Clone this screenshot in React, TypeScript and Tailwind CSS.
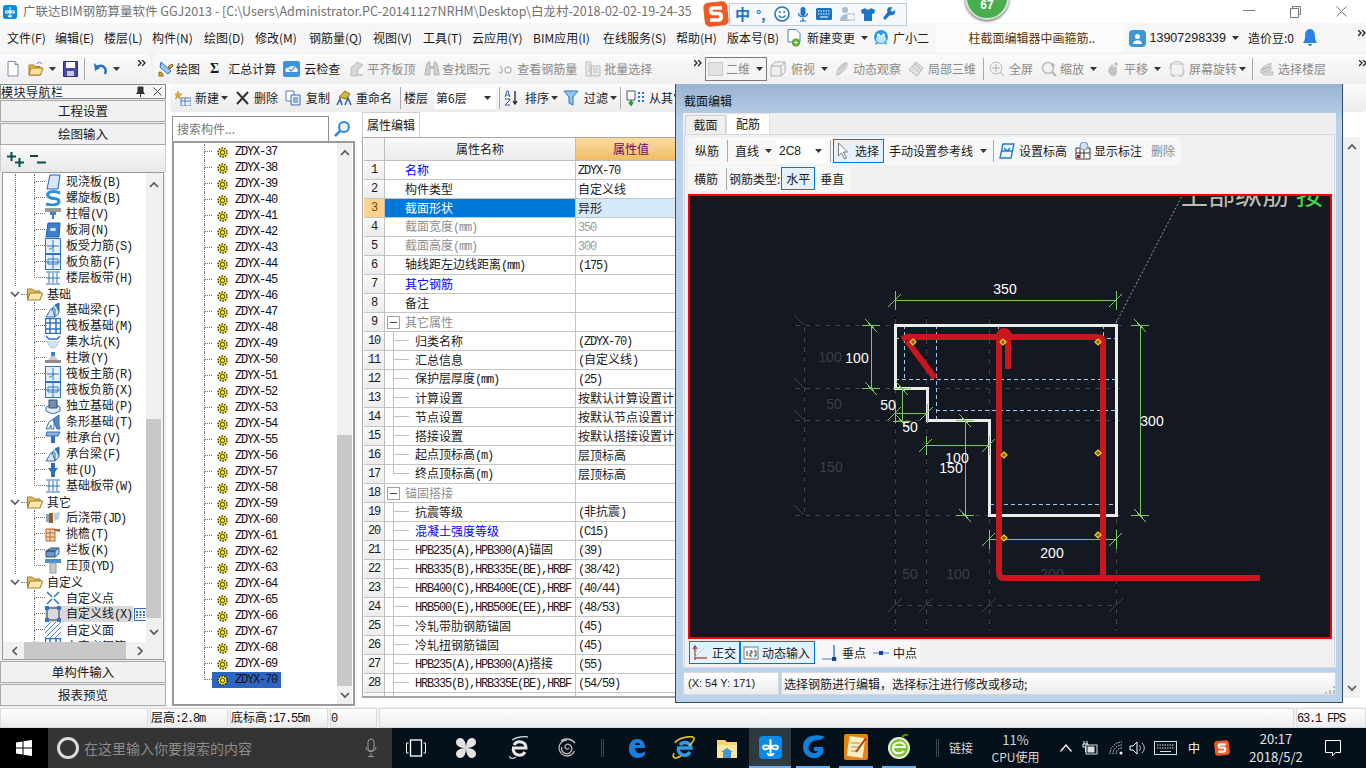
import type { ReactNode } from 'react';

const mono = "font-['Liberation_Mono',monospace] text-[12px] tracking-[-1.2px]";

function I({ children, w = 16, h = 16, className = '' }: { children: ReactNode; w?: number; h?: number; className?: string }) {
  return (
    <svg width={w} height={h} viewBox={`0 0 ${w} ${h}`} className={`shrink-0 ${className}`}>
      {children}
    </svg>
  );
}

function Caret({ className = '' }: { className?: string }) {
  return (
    <svg width="7" height="4" viewBox="0 0 7 4" className={`shrink-0 ${className}`}>
      <path d="M0 0h7L3.5 4z" fill="#333" />
    </svg>
  );
}

function More({ className = '' }: { className?: string }) {
  return (
    <svg width="8" height="7" viewBox="0 0 8 7" className={`shrink-0 ${className}`}>
      <path d="M0 0l3 3-3 3M4 0l3 3-3 3" fill="none" stroke="#222" strokeWidth="1.3" />
    </svg>
  );
}

function Sep({ className = '' }: { className?: string }) {
  return <div className={`w-px h-[22px] bg-[#a8a8a8] shrink-0 ${className}`} />;
}

// SimSun style text: ascii in a narrow mono, the rest in 12px
function Sim({ text }: { text: string }) {
  const parts = text.split(/([\x00-\x7f]+)/).filter(Boolean);
  return (
    <span className="whitespace-nowrap">
      {parts.map((p, i) =>
        /^[\x00-\x7f]+$/.test(p) ? (
          <span key={i} className={mono}>{p}</span>
        ) : (
          <span key={i}>{p}</span>
        ),
      )}
    </span>
  );
}

function AppLogo({ size = 14 }: { size?: number }) {
  return (
    <svg width={size} height={size} viewBox="0 0 14 14" className="shrink-0">
      <rect width="14" height="14" rx="2.500" fill="#0a8be8" />
      <path
        d="M7 2.500V11M7 6.800C5 5.300 2.500 5.500 2.500 7S5 8.300 7 6.800C9 5.300 11.500 5.500 11.500 7S9 8.300 7 6.800M5.300 10.800c.5 1.300 3 1.300 3.400 0"
        fill="none"
        stroke="#fff"
        strokeWidth="1.200"
        strokeLinecap="round"
      />
    </svg>
  );
}

function SLogo({ size = 26 }: { size?: number }) {
  return (
    <svg width={size} height={size} viewBox="0 0 26 26" className="shrink-0">
      <rect x="1" y="1" width="24" height="24" rx="5" fill="#ee5a24" transform="rotate(-6 13 13)" />
      <path d="M19 7H10c-3 0-3 5 0 5.500h6c3 0 3 6 0 6.500H7" fill="none" stroke="#fff" strokeWidth="3.600" />
    </svg>
  );
}

function SogouBar() {
  return (
    <div className="absolute left-[703px] top-0 flex items-center h-[28px]">
      <SLogo />
      <div className="h-[23px] w-[178px] border border-[#b8cbe2] bg-[#f6f8fb] flex items-center">
        <span className="ml-[5px] text-[15px] font-bold text-[#1b74c5]">中</span>
        <span className="ml-[6px] text-[13px] font-bold text-[#1b74c5] leading-none">°,</span>
        <I className="ml-[8px]">
          <circle cx="8" cy="8" r="7" fill="#fff" stroke="#1b74c5" strokeWidth="1.600" />
          <path d="M4.500 9.500c2 2.500 5 2.500 7 0" fill="none" stroke="#1b74c5" strokeWidth="1.300" />
          <circle cx="5.800" cy="6" r="1" fill="#1b74c5" />
          <circle cx="10.200" cy="6" r="1" fill="#1b74c5" />
        </I>
        <I className="ml-[7px]" w={12}>
          <rect x="3.500" y="1" width="5" height="9" rx="2.500" fill="#1b74c5" />
          <path d="M1.500 7c0 5 9 5 9 0M6 12v3M3 15h6" fill="none" stroke="#1b74c5" strokeWidth="1.200" />
        </I>
        <I className="ml-[7px]">
          <rect y="2" width="16" height="12" rx="1.500" fill="#1b74c5" />
          <path d="M2 5h12M2 8h12" stroke="#fff" strokeDasharray="1.500 1" />
          <path d="M4 11h8" stroke="#fff" />
        </I>
        <I className="ml-[7px]">
          <circle cx="6" cy="4" r="3" fill="#a9bcd0" />
          <path d="M1 15c0-8 9-8 10-3v3z" fill="#a9bcd0" />
          <rect x="8" y="8" width="8" height="6" fill="#f6f8fb" stroke="#a9bcd0" />
        </I>
        <I className="ml-[5px]">
          <path d="M5 2L1 4l1 4 2-.5V15h8V7.500l2 .5 1-4-4-2c-1 2-5 2-6 0z" fill="#1b74c5" />
        </I>
        <I className="ml-[6px]" w={14}>
          <path d="M13 4l-2.500 2-2-2L10.500 1.500C7-.5 4 3 5.500 6L1 12l2 2 5-5c4 1 6-2 5-5z" fill="#1b74c5" />
        </I>
      </div>
    </div>
  );
}

function TitleBar() {
  return (
    <div className="h-[23px] bg-white flex items-center relative">
      <div className="ml-[3px]"><AppLogo /></div>
      <span className="ml-[6px] text-[12.5px] text-[#707070] whitespace-nowrap">
        广联达BIM钢筋算量软件 GGJ2013 - [C:\Users\Administrator.PC-20141127NRHM\Desktop\白龙村-2018-02-02-19-24-35
      </span>
      <div className="absolute left-[965px] top-[-24px] w-[44px] h-[44px] rounded-full bg-[#47ad4f] border-[2px] border-[#d7e6d8] shadow-[0_1px_3px_#555] flex items-end justify-center pb-[7px]">
        <span className="text-[12px] font-bold text-white leading-none font-['Liberation_Sans',sans-serif]">67</span>
      </div>
      <div className="absolute left-[1243px] top-[10px] w-[12px] h-px bg-[#777]" />
      <div className="absolute left-[1290px] top-[6px]">
        <I w={11} h={12}>
          <path d="M2.500 2.500V.5h8v8H8.500M.5 2.500h8v9h-8z" fill="none" stroke="#777" />
        </I>
      </div>
      <div className="absolute left-[1336px] top-[6px]">
        <I w={11} h={11}>
          <path d="M.5.5l10 10M10.500.5l-10 10" stroke="#777" />
        </I>
      </div>
    </div>
  );
}

function MenuBar() {
  const items: [string, string][] = [
    ['文件(F)', 'w-[48px]'],
    ['编辑(E)', 'w-[49px]'],
    ['楼层(L)', 'w-[48px]'],
    ['构件(N)', 'w-[52px]'],
    ['绘图(D)', 'w-[51px]'],
    ['修改(M)', 'w-[54px]'],
    ['钢筋量(Q)', 'w-[64px]'],
    ['视图(V)', 'w-[50px]'],
    ['工具(T)', 'w-[49px]'],
    ['云应用(Y)', 'w-[61px]'],
    ['BIM应用(I)', 'w-[70px]'],
    ['在线服务(S)', 'w-[73px]'],
    ['帮助(H)', 'w-[51px]'],
    ['版本号(B)', 'w-[60px]'],
  ];
  return (
    <div className="h-[30px] bg-[#f6f6f6] flex items-center text-[12px] text-[#1a1a1a] whitespace-nowrap">
      <div className="flex items-center pl-[7px]">
        {items.map(([t, c]) => (
          <span key={t} className={`${c} shrink-0`}>{t}</span>
        ))}
      </div>
      <I w={14} h={18}>
        <path d="M1 .5h8l4 4V13H1z" fill="#fff" stroke="#3a7fc5" />
        <circle cx="9" cy="13.500" r="4" fill="#5aa82c" />
        <path d="M7 13.500h4M9 11.500v4" stroke="#fff" />
      </I>
      <span className="ml-[6px]">新建变更</span>
      <Caret className="ml-[6px]" />
      <I className="ml-[5px]">
        <circle cx="8" cy="7" r="7" fill="#2b9be8" />
        <ellipse cx="8" cy="9" rx="5" ry="4" fill="#bfe4fb" />
        <circle cx="5.500" cy="5" r="1.500" fill="#fff" />
        <circle cx="10.500" cy="5" r="1.500" fill="#fff" />
        <path d="M3 12l-1 3 3-1.500M13 12l1 3-3-1.500" fill="#2b9be8" />
      </I>
      <span className="ml-[4px]">广小二</span>
      <div className="ml-[7px] w-[188px] h-[29px] bg-[#fbfbfb] rounded-sm flex items-center justify-center text-[#5c3400] pl-[4px]">
        柱截面编辑器中画箍筋..
      </div>
      <div className="ml-[5px] h-[17px] w-[17px] rounded-sm bg-[#3f96d6] flex items-center justify-center">
        <I w={11} h={11}>
          <circle cx="5.500" cy="3.500" r="2.500" fill="#fff" />
          <path d="M1 11c0-5 9-5 9 0z" fill="#fff" />
        </I>
      </div>
      <span className="ml-[4px] font-['Liberation_Sans',sans-serif] text-[12.5px]">13907298339</span>
      <Caret className="ml-[6px]" />
      <span className="ml-[9px]">造价豆:0</span>
      <I className="ml-[8px]" h={20}>
        <path d="M8 1c-4 0-5 4-5 8 0 3-1 4-2 6h14c-1-2-2-3-2-6 0-4-1-8-5-8zM6 16a2 2 0 004 0z" fill="#2a82e4" />
      </I>
      <More className="ml-[40px] -mt-[10px]" />
    </div>
  );
}

function GrayT({ children, className = '' }: { children: ReactNode; className?: string }) {
  return <span className={`text-[#8a8a8a] ${className}`}>{children}</span>;
}

function MainToolbar() {
  return (
    <div className="h-[31px] bg-[#f2f2f2] flex items-center gap-[4px] text-[12px] text-[#1a1a1a] whitespace-nowrap">
      <div className="w-[150px] h-[29px] shrink-0 bg-gradient-to-b from-[#fbfbfb] to-[#efefef] rounded-sm flex items-center">
        <I w={12} className="ml-[7px]">
          <path d="M1 .5h7l3 3V15H1z" fill="#fff" stroke="#7f8ea3" />
          <path d="M8 .5v3h3" fill="#dde" stroke="#7f8ea3" />
        </I>
        <I className="ml-[9px]">
          <path d="M1 14V4h5l1 1.500h5V14z" fill="#e8b94a" stroke="#a87a1c" />
          <path d="M3 7h12l-2.500 7H1z" fill="#fbe29b" stroke="#a87a1c" />
          <path d="M9 3c1-2 4-2 5 0" fill="none" stroke="#3a7fc5" />
        </I>
        <Caret className="ml-[5px]" />
        <I w={15} className="ml-[7px]">
          <path d="M.5.5h14v15H.5z" fill="#474aa8" stroke="#2c2e78" />
          <rect x="3" y="1" width="9" height="6" fill="#fff" />
          <rect x="4" y="10" width="7" height="5" fill="#c9c9d8" />
        </I>
        <Sep className="ml-[6px]" />
        <I w={14} className="ml-[8px]">
          <path d="M12 13c2-5-1-9-6-8L3 6.500" fill="none" stroke="#2b6fc0" strokeWidth="2.500" />
          <path d="M1 2l1 8 5-3z" fill="#2b6fc0" />
        </I>
        <Caret className="ml-[6px]" />
        <More className="ml-[18px] -mt-[10px]" />
      </div>
      <div className="w-[546px] h-[29px] shrink-0 bg-gradient-to-b from-[#fbfbfb] to-[#efefef] rounded-sm flex items-center">
        <I className="ml-[4px]">
          <path d="M3 1l10 9-3 3-8-7z" fill="#9cc6ea" stroke="#2b6fc0" />
          <path d="M1 11c3 0 4 2 4 4H1zM10 6l4-3 1 2-3 3z" fill="#e0a22a" stroke="#8a5f10" />
        </I>
        <span className="ml-[2px]">绘图</span>
        <span className="ml-[10px] font-bold text-[14px] font-['Liberation_Serif',serif]">Σ</span>
        <span className="ml-[9px]">汇总计算</span>
        <I w={17} className="ml-[7px]">
          <rect width="17" height="16" rx="2" fill="#3a93dc" />
          <path d="M3 11c-2-3 1-5 3-4 1-3 6-3 7 0 2 0 3 3 1 4z" fill="#fff" />
          <path d="M6 8l2 2 4-4" fill="none" stroke="#3a93dc" strokeWidth="1.300" />
        </I>
        <span className="ml-[4px]">云检查</span>
        <I className="ml-[9px]">
          <path d="M8 1l6 3-5 4-1 7H2V7z" fill="#d8d8d8" stroke="#bdbdbd" />
          <path d="M5 13h9v2H5z" fill="#c8c8c8" />
        </I>
        <GrayT className="ml-[2px]">平齐板顶</GrayT>
        <I className="ml-[9px]">
          <path d="M2 6l2-5h2v13H1zM14 6l-2-5h-2v13h5z" fill="#cfcfcf" stroke="#b5b5b5" />
          <rect x="6" y="5" width="4" height="3" fill="#bbb" />
        </I>
        <GrayT className="ml-[2px]">查找图元</GrayT>
        <I className="ml-[7px]">
          <circle cx="11" cy="9" r="3" fill="none" stroke="#bdbdbd" strokeWidth="1.500" />
          <path d="M2 11c2 2 4 0 3-3L3 5" fill="none" stroke="#bdbdbd" strokeWidth="1.500" />
        </I>
        <GrayT className="ml-[4px]">查看钢筋量</GrayT>
        <I className="ml-[8px]">
          <path d="M1 1h5v14H1zM6 5h9v10H6z" fill="#e8e8e8" stroke="#bdbdbd" />
          <path d="M3 4h2M3 7h2M3 10h2M8 8h5M8 11h5" stroke="#bdbdbd" />
        </I>
        <GrayT className="ml-[3px]">批量选择</GrayT>
        <More className="ml-[42px] -mt-[10px]" />
      </div>
      <div className="flex-1 h-[29px] bg-gradient-to-b from-[#fbfbfb] to-[#efefef] rounded-sm flex items-center">
        <div className="ml-[1px] w-[62px] h-[24px] border border-[#7a7a7a] flex items-center bg-[#f4f4f4]">
          <I w={15} h={14} className="ml-[2px]">
            <rect x=".5" y=".5" width="14" height="13" fill="#e3e3e3" stroke="#c9c9c9" />
          </I>
          <GrayT className="ml-[3px]">二维</GrayT>
          <Caret className="ml-[6px]" />
        </div>
        <I className="ml-[3px]">
          <path d="M1 5l4-4h10v10l-4 4H1zM1 5h10v10M11 5l4-4" fill="#f0f0f0" stroke="#b0b0b0" />
        </I>
        <GrayT className="ml-[5px]">俯视</GrayT>
        <Caret className="ml-[6px]" />
        <I className="ml-[6px]">
          <path d="M13 1C7 2 3 7 2 13c-1 3 4 1 6-1s7-7 6-10z" fill="#c9c9c9" />
          <path d="M1 11c4 1 9-3 13-9" fill="none" stroke="#e6e6e6" />
        </I>
        <GrayT className="ml-[3px]">动态观察</GrayT>
        <I className="ml-[7px]">
          <path d="M8 1l7 6-6 8-8-6z" fill="#e3e3e3" stroke="#b5b5b5" />
          <path d="M4 5l7 6M7 3l6 6" stroke="#b5b5b5" />
        </I>
        <GrayT className="ml-[4px]">局部三维</GrayT>
        <Sep className="ml-[7px]" />
        <I className="ml-[5px]">
          <circle cx="7" cy="7" r="6" fill="#f3f3f3" stroke="#b8b8b8" />
          <path d="M7 3v8M3 7h8M11 11l4 4" stroke="#b0b0b0" />
        </I>
        <GrayT className="ml-[4px]">全屏</GrayT>
        <I className="ml-[8px]">
          <circle cx="7" cy="7" r="5.500" fill="#f3f3f3" stroke="#bcbcbc" strokeWidth="1.500" />
          <path d="M11 11l4 4" stroke="#b0b0b0" strokeWidth="2" />
          <path d="M12 2v4M10 4h4" stroke="#b0b0b0" />
        </I>
        <GrayT className="ml-[3px]">缩放</GrayT>
        <Caret className="ml-[6px]" />
        <I className="ml-[8px]">
          <path d="M4 7c0-2 2-2 2-1V4c0-1 2-1 2 0v2c1-1 2-1 2 0 1-1 2 0 2 1v4c0 3-2 4-4 4s-4-2-5-5z" fill="#c4c4c4" />
          <path d="M11 1v4M9 3h4" stroke="#b0b0b0" />
        </I>
        <GrayT className="ml-[3px]">平移</GrayT>
        <Caret className="ml-[6px]" />
        <I w={18} className="ml-[7px]">
          <rect x="3" y="3" width="12" height="11" fill="#f3f3f3" stroke="#c4c4c4" />
          <path d="M2 8a7 7 0 0113-4M16 9a7 7 0 01-13 4" fill="none" stroke="#b5b5b5" />
        </I>
        <GrayT className="ml-[3px]">屏幕旋转</GrayT>
        <Caret className="ml-[2px]" />
        <Sep className="ml-[6px]" />
        <I w={15} className="ml-[7px]">
          <path d="M3 6l8-4v3L3 9zM1 8l10-2v3L1 12zM3 11h10v3H3z" fill="#d9d9d9" stroke="#bdbdbd" />
        </I>
        <GrayT className="ml-[3px]">选择楼层</GrayT>
        <More className="ml-[33px] -mt-[10px]" />
      </div>
    </div>
  );
}

const treeIcons: Record<string, ReactNode> = {
  slab: <path d="M5 1h10l-2 14H2z" fill="#d8e6f7" stroke="#1f5fb5" />,
  spiral: <path d="M15 3C8 0 1 2 3 6s11 1 11 5-7 5-13 3" fill="none" stroke="#2a90e2" strokeWidth="3" />,
  cap: (
    <>
      <rect y="2" width="16" height="4" fill="#9a9a9a" />
      <path d="M5 6h6v3H9v4H7V9H5z" fill="#3f7fc9" />
    </>
  ),
  hole: (
    <>
      <path d="M3 1h12l-1 14H1z" fill="#3f7fd0" stroke="#1f5fb5" />
      <rect x="5" y="6" width="6" height="3" rx="1.500" fill="#d8e6f7" />
    </>
  ),
  rebar: (
    <>
      <rect x=".5" y=".5" width="15" height="15" fill="#e6f0fb" stroke="#2f74c4" />
      <path d="M8 2v12M2 8h12M4 11c2 0 4-1 4-3" fill="none" stroke="#2f74c4" />
    </>
  ),
  neg: (
    <>
      <rect x=".5" y=".5" width="15" height="15" fill="#e6f0fb" stroke="#2f74c4" />
      <path d="M8 1v14M3 5h10v5H3zM1 8h14" fill="none" stroke="#2f74c4" />
    </>
  ),
  band: <path d="M1 2h14M1 14h14M4 3v10M8 3v10M12 3v10M1 8h14" fill="none" stroke="#2f74c4" />,
  beam: (
    <>
      <path d="M1 15l5-8h4v8zM7 6l7-5v10l-4 4z" fill="#d5e5f7" stroke="#2f6fb5" />
      <path d="M10 2l4-1v10z" fill="#2f6fb5" />
    </>
  ),
  raft: (
    <>
      <rect x=".5" y=".5" width="15" height="15" fill="#fff" stroke="#2f74c4" strokeWidth="1.500" />
      <path d="M5 1v14M11 1v14M1 5h14M1 11h14" stroke="#2f74c4" strokeWidth="1.500" />
    </>
  ),
  pit: (
    <>
      <path d="M1 2l3 3h8l3-3" fill="none" stroke="#2f74c4" strokeWidth="1.500" />
      <path d="M1 7c2 0 2 7 7 7s5-7 7-7" fill="#cfe3f6" stroke="#7fa9d8" strokeDasharray="1 1" />
    </>
  ),
  pier: (
    <>
      <path d="M6 2h4v4H6z" fill="#3f7fc9" />
      <path d="M3 10l3-4h4l3 4z" fill="#c9c9c9" />
      <rect y="10" width="16" height="3" fill="#8c8c8c" />
    </>
  ),
  iso: (
    <>
      <path d="M1 9l7-3 7 3v4l-7 3-7-3z" fill="#e8f0fa" stroke="#2f6fb5" />
      <path d="M4 2h8v8H4z" fill="#6f8fb5" stroke="#2f4f7f" />
    </>
  ),
  strip: (
    <>
      <path d="M1 15l3-7 3-2h2v9h-3v-4l-2 4z" fill="#fff" stroke="#2f6fb5" />
      <path d="M8 5l6-4v10l1 4h-3z" fill="#5f88bd" stroke="#2f6fb5" />
    </>
  ),
  piletop: (
    <>
      <path d="M2 2h13l-2 4H1z" fill="#8fb2d9" stroke="#2f6fb5" />
      <path d="M6 6h4v7H6z" fill="#2f6fb5" />
    </>
  ),
  pile: <path d="M6 1h4v5h3l-3 4v5H6v-5L3 6h3z" fill="#2f6fb5" />,
  post: (
    <>
      <path d="M1 4h6l1 8H1z" fill="#87a4c4" />
      <path d="M4 3h4v10H4z" fill="#a1561d" />
      <path d="M9 3l6-1-1 7-5 2z" fill="#b8cfe8" />
    </>
  ),
  eave: (
    <>
      <path d="M1 3h9v12H1z" fill="#f3d6b5" stroke="#c0622a" />
      <path d="M1 7h9M1 11h9M5 3v12" stroke="#c0622a" />
      <path d="M7 3h8v3l-4-1z" fill="#8f6b4a" />
    </>
  ),
  rail: (
    <>
      <path d="M1 9l5-3h8l-4 3zM1 9h9v6H1z" fill="#6b97c9" stroke="#2f4f7f" />
      <path d="M10 9l4-3v6l-4 3z" fill="#b8d0ea" stroke="#2f6fb5" />
    </>
  ),
  coping: (
    <>
      <rect y="1" width="16" height="4" fill="#4f8fd0" />
      <rect x="5" y="5" width="6" height="10" fill="#c8c8c8" stroke="#999" />
    </>
  ),
  point: <path d="M2 2l5 5M14 2L9 7M2 14l5-5M14 14L9 9" stroke="#2f74c4" strokeWidth="1.500" />,
  line: (
    <>
      <rect x="2" y="2" width="12" height="12" fill="none" stroke="#23374f" />
      <path d="M0 0h4v4H0zM12 0h4v4h-4zM0 12h4v4H0zM12 12h4v4h-4z" fill="#2f74c4" />
    </>
  ),
  area: <path d="M0 6L6 0M0 11L11 0M0 16L16 0M5 16L16 5M10 16l6-6" stroke="#3f87d6" />,
};

type TreeRow = { t: string; i?: string; last?: boolean; outer?: boolean; sel?: boolean; folder?: boolean };

const treeRows: TreeRow[] = [
  { t: '现浇板(B)', i: 'slab', outer: true },
  { t: '螺旋板(B)', i: 'spiral', outer: true },
  { t: '柱帽(V)', i: 'cap', outer: true },
  { t: '板洞(N)', i: 'hole', outer: true },
  { t: '板受力筋(S)', i: 'rebar', outer: true },
  { t: '板负筋(F)', i: 'neg', outer: true },
  { t: '楼层板带(H)', i: 'band', outer: true, last: true },
  { t: '基础', folder: true },
  { t: '基础梁(F)', i: 'beam', outer: true },
  { t: '筏板基础(M)', i: 'raft', outer: true },
  { t: '集水坑(K)', i: 'pit', outer: true },
  { t: '柱墩(Y)', i: 'pier', outer: true },
  { t: '筏板主筋(R)', i: 'rebar', outer: true },
  { t: '筏板负筋(X)', i: 'neg', outer: true },
  { t: '独立基础(P)', i: 'iso', outer: true },
  { t: '条形基础(T)', i: 'strip', outer: true },
  { t: '桩承台(V)', i: 'piletop', outer: true },
  { t: '承台梁(F)', i: 'beam', outer: true },
  { t: '桩(U)', i: 'pile', outer: true },
  { t: '基础板带(W)', i: 'band', outer: true, last: true },
  { t: '其它', folder: true },
  { t: '后浇带(JD)', i: 'post', outer: true },
  { t: '挑檐(T)', i: 'eave', outer: true },
  { t: '栏板(K)', i: 'rail', outer: true },
  { t: '压顶(YD)', i: 'coping', outer: true, last: true },
  { t: '自定义', folder: true },
  { t: '自定义点', i: 'point' },
  { t: '自定义线(X)', i: 'line', sel: true },
  { t: '自定义面', i: 'area' },
  { t: '自定义钢筋', i: 'raft' },
];

function Connector({ last }: { last?: boolean }) {
  return (
    <div className="w-[11px] h-full shrink-0 flex flex-col">
      <div className="h-2 border-l border-b border-dotted border-[#777]" />
      <div className={last ? 'h-2' : 'h-2 border-l border-dotted border-[#777]'} />
    </div>
  );
}

function FolderIcon() {
  return (
    <I w={16} h={14}>
      <path d="M.5 12V2h5l1.500 2h6v8z" fill="#e8c05a" stroke="#9a7a2a" />
      <path d="M3 6h12.500l-2.500 7H.5z" fill="#fde9ad" stroke="#9a7a2a" />
    </I>
  );
}

function Chevron({ dir, className = '' }: { dir: 'up' | 'down' | 'left' | 'right'; className?: string }) {
  const d = { up: 'M1 6l4-4 4 4', down: 'M1 2l4 4 4-4', left: 'M6 1L2 5l4 4', right: 'M2 1l4 4-4 4' }[dir];
  const sz = dir === 'up' || dir === 'down' ? { w: 10, h: 8 } : { w: 8, h: 10 };
  return (
    <svg width={sz.w} height={sz.h} viewBox={`0 0 ${sz.w} ${sz.h}`} className={`shrink-0 ${className}`}>
      <path d={d} fill="none" stroke="#555" strokeWidth="1.700" />
    </svg>
  );
}

function NavButton({ label, className = '' }: { label: string; className?: string }) {
  return (
    <div className={`h-[22px] border border-[#a8a8a8] bg-[#f1f1f1] flex items-center justify-center text-[12.5px] text-[#1a1a1a] ${className}`}>
      {label}
    </div>
  );
}

function LeftPanel() {
  return (
    <div className="w-[166px] shrink-0 flex flex-col text-[12px] text-[#1a1a1a] bg-[#f0f0f0]">
      <div className="h-[15px] border border-[#8a8a8a] bg-[#f6f6f6] flex items-center leading-none">
        <span className="tracking-[0.5px]">模块导航栏</span>
        <I w={9} h={11} className="ml-[72px]">
          <path d="M2 1h5v5l1.500 1.500h-8L2 6zM4.500 7.500V11" fill="#333" stroke="#333" />
        </I>
        <I w={9} h={9} className="ml-[8px]">
          <path d="M.5.5l8 8M8.500.5l-8 8" stroke="#444" />
        </I>
      </div>
      <NavButton label="工程设置" className="mt-[1px] mx-0" />
      <NavButton label="绘图输入" className="mt-[1px]" />
      <div className="h-[27px] bg-gradient-to-b from-[#fafafa] to-[#e8e8e8] border-x border-[#cfcfcf] flex items-center pl-[6px] gap-[5px]">
        <I w={18} h={16}>
          <path d="M4.500 1v9M0 5.500h9M12.500 7v9M8 11.500h9" stroke="#0a4f4a" strokeWidth="2" />
        </I>
        <I w={17} h={16}>
          <path d="M0 5h8M7 11.500h9" stroke="#0a4f4a" strokeWidth="2" />
        </I>
      </div>
      <div className="h-[488px] mx-[2px] border border-[#9a9a9a] flex flex-col bg-white">
        <div className="h-[469px] flex overflow-hidden">
          <div className="w-[143px] pt-px overflow-hidden">
            {treeRows.map((r) =>
              r.folder ? (
                <div key={r.t} className="h-4 flex items-center">
                  <Chevron dir="down" className="ml-[7px]" />
                  <div className="w-[6px] ml-[1px] border-b border-dotted border-[#777]" />
                  <FolderIcon />
                  <span className="ml-[4px] whitespace-nowrap">{r.t}</span>
                </div>
              ) : (
                <div key={r.t} className="h-4 flex items-center">
                  <div className="w-[12px] h-full shrink-0" />
                  <div className={r.outer ? 'w-[19px] h-full shrink-0 border-l border-dotted border-[#777]' : 'w-[19px] h-full shrink-0'} />
                  <Connector last={r.last} />
                  <div className={r.sel ? 'flex items-center h-full bg-[#d9d9d9] pr-[1px] shrink-0' : 'flex items-center h-full shrink-0'}>
                    <I>{treeIcons[r.i!]}</I>
                    <span className="ml-[5px]"><Sim text={r.t} /></span>
                  </div>
                  {r.sel && (
                    <I w={13} h={13} className="ml-[1px]">
                      <rect x=".5" y=".5" width="12" height="12" fill="#fff" stroke="#2f74c4" />
                      <path d="M3 3v7M6.500 3v7M10 3v7" stroke="#2f74c4" strokeWidth="2" strokeDasharray="2 1" />
                    </I>
                  )}
                </div>
              ),
            )}
          </div>
          <div className="w-[15px] bg-[#f0f0f0] flex flex-col items-center shrink-0">
            <div className="h-[16px] flex items-center pt-[8px]"><Chevron dir="up" /></div>
            <div className="flex-1 w-full flex flex-col justify-end">
              <div className="h-[199px] bg-[#c8c8c8]" />
            </div>
            <div className="h-[24px] pt-[10px]"><Chevron dir="down" /></div>
          </div>
          <div className="flex-1 bg-[#f0f0f0]" />
        </div>
        <div className="flex-1 bg-[#f0f0f0] flex items-center">
          <Chevron dir="left" className="ml-[8px]" />
          <div className="ml-[5px] w-[102px] h-full bg-[#c8c8c8]" />
          <Chevron dir="right" className="ml-[10px]" />
        </div>
      </div>
      <NavButton label="单构件输入" className="mt-[1px]" />
      <NavButton label="报表预览" className="mt-[1px]" />
    </div>
  );
}

function SecondToolbar() {
  return (
    <div className="h-[28px] ml-[4px] bg-gradient-to-b from-[#fbfbfb] to-[#ececec] rounded-sm flex items-center text-[12px] text-[#1a1a1a] whitespace-nowrap">
      <I className="ml-[5px]">
        <path d="M3 1l1 3h3l-2.500 2L5 9 3 7 .5 9l1-3L0 4h2z" fill="#e3b21a" stroke="#a0780a" strokeWidth=".5" />
        <rect x="6" y="8" width="10" height="8" fill="#e8f0fa" stroke="#5d7ea5" />
        <path d="M6 11h10M10 8v8" stroke="#5d7ea5" />
      </I>
      <span className="ml-[4px]">新建</span>
      <Caret className="ml-[2px]" />
      <I w={13} h={14} className="ml-[8px]">
        <path d="M1 1l11 12M12 1L1 13" stroke="#333" strokeWidth="2" />
      </I>
      <span className="ml-[5px]">删除</span>
      <I className="ml-[7px]">
        <path d="M1 1h8v10H1z" fill="#fff" stroke="#5d7ea5" />
        <path d="M6 5h9v10H6z" fill="#e8f0fa" stroke="#3a6da8" />
        <path d="M8 8h5M8 10h5M8 12h5" stroke="#3a6da8" />
      </I>
      <span className="ml-[5px]">复制</span>
      <I className="ml-[6px]">
        <path d="M3 7l6-6 5 3-4 5z" fill="#d8b43a" stroke="#8f7215" />
        <path d="M1 15l3-6 2 6M9 15l3-7 3 7" fill="none" stroke="#2f5fa5" strokeWidth="1.500" />
      </I>
      <span className="ml-[4px]">重命名</span>
      <Sep className="ml-[8px]" />
      <span className="ml-[3px]">楼层</span>
      <div className="ml-[6px] w-[62px] h-[21px] bg-white flex items-center justify-between px-[2px]">
        <span>第6层</span>
        <Caret className="mr-[3px]" />
      </div>
      <Sep className="ml-[3px]" />
      <I className="ml-[4px]">
        <path d="M1 7l2-6h1l2 6M2 5h3M1 9h5v1l-5 5h5" fill="none" stroke="#2f5fa5" />
        <path d="M11 1v13M9 11l2 3 2-3" fill="none" stroke="#222" strokeWidth="1.300" />
      </I>
      <span className="ml-[5px]">排序</span>
      <Caret className="ml-[2px]" />
      <I className="ml-[5px]">
        <path d="M1 1h14L10 7v8l-4-2V7z" fill="#8fc4ee" stroke="#2b74c0" />
      </I>
      <span className="ml-[5px]">过滤</span>
      <Caret className="ml-[2px]" />
      <Sep className="ml-[3px]" />
      <I w={19} className="ml-[5px]">
        <path d="M1 1h8v9H1z" fill="#fff" stroke="#555" />
        <path d="M5 10v4M3 12l2 3 2-3" fill="none" stroke="#2c9a3a" strokeWidth="2" />
        <path d="M12 3h2M16 3h2M12 7h2M16 7h2M12 11h2M16 11h2" stroke="#2f74c4" strokeWidth="2" />
      </I>
      <span className="ml-[4px]">从其它楼层复制</span>
    </div>
  );
}

function GearDot() {
  return (
    <I w={11} h={11}>
      <circle cx="5.500" cy="5.500" r="4.500" fill="#ffee00" stroke="#222" strokeWidth="1.400" strokeDasharray="1.500 1.300" />
      <circle cx="5.500" cy="5.500" r="2.200" fill="#ffee00" stroke="#333" />
    </I>
  );
}

function ListPanel() {
  const rows = Array.from({ length: 34 }, (_, i) => i + 37);
  return (
    <div className="w-[183px] shrink-0 flex flex-col">
      <div className="mt-[3px] h-[27px] flex items-center">
        <div className="w-[157px] h-[26px] border border-[#8e8e8e] bg-white flex items-center pl-[4px] text-[12px] text-[#777]">
          搜索构件...
        </div>
        <I w={18} h={18} className="ml-[4px]">
          <circle cx="11" cy="7" r="5" fill="#e8f3fb" stroke="#2b8ad6" strokeWidth="2" />
          <path d="M7 11l-5 5" stroke="#2b8ad6" strokeWidth="2.500" />
        </I>
      </div>
      <div className="mt-[-1px] h-[565px] border-2 border-[#9b9b9b] bg-white flex">
        <div className="w-[162px] shrink-0 pt-px text-[12px] text-[#111]">
          {rows.map((n) => (
            <div key={n} className="h-4 flex items-center">
              <div className="w-[30px] h-full shrink-0" />
              <div className="w-[8px] h-full shrink-0 flex flex-col">
                <div className="h-2 border-l border-b border-dotted border-[#777]" />
                <div className={n === 70 ? 'h-2' : 'h-2 border-l border-dotted border-[#777]'} />
              </div>
              <div className={n === 70 ? 'h-4 w-[69px] bg-[#2d65c0] flex items-center pl-[5px]' : 'h-4 flex items-center pl-[5px]'}>
                <GearDot />
                <span className={`ml-[7px] ${mono}`}>ZDYX-{n}</span>
              </div>
            </div>
          ))}
        </div>
        <div className="w-[15px] mx-[1px] bg-[#f0f0f0] flex flex-col items-center shrink-0">
          <div className="h-[17px] pt-[6px]"><Chevron dir="up" /></div>
          <div className="flex-1 w-full flex flex-col justify-end">
            <div className="h-[251px] bg-[#c8c8c8]" />
          </div>
          <div className="h-[18px] pt-[5px]"><Chevron dir="down" /></div>
        </div>
      </div>
    </div>
  );
}

type PropRow = { name: string; value?: string; kind: 'top' | 'sub' | 'group'; color?: string; last?: boolean; gray?: boolean };

const propRows: PropRow[] = [
  { name: '名称', value: 'ZDYX-70', kind: 'top', color: 'text-[#0000ff]' },
  { name: '构件类型', value: '自定义线', kind: 'top' },
  { name: '截面形状', value: '异形', kind: 'top' },
  { name: '截面宽度(mm)', value: '350', kind: 'top', color: 'text-[#8f8f8f]', gray: true },
  { name: '截面高度(mm)', value: '300', kind: 'top', color: 'text-[#8f8f8f]', gray: true },
  { name: '轴线距左边线距离(mm)', value: '(175)', kind: 'top' },
  { name: '其它钢筋', kind: 'top', color: 'text-[#0000ff]' },
  { name: '备注', kind: 'top' },
  { name: '其它属性', kind: 'group' },
  { name: '归类名称', value: '(ZDYX-70)', kind: 'sub' },
  { name: '汇总信息', value: '(自定义线)', kind: 'sub' },
  { name: '保护层厚度(mm)', value: '(25)', kind: 'sub' },
  { name: '计算设置', value: '按默认计算设置计算', kind: 'sub' },
  { name: '节点设置', value: '按默认节点设置计算', kind: 'sub' },
  { name: '搭接设置', value: '按默认搭接设置计算', kind: 'sub' },
  { name: '起点顶标高(m)', value: '层顶标高', kind: 'sub' },
  { name: '终点顶标高(m)', value: '层顶标高', kind: 'sub', last: true },
  { name: '锚固搭接', kind: 'group' },
  { name: '抗震等级', value: '(非抗震)', kind: 'sub' },
  { name: '混凝土强度等级', value: '(C15)', kind: 'sub', color: 'text-[#0000ff]' },
  { name: 'HPB235(A),HPB300(A)锚固', value: '(39)', kind: 'sub' },
  { name: 'HRB335(B),HRB335E(BE),HRBF', value: '(38/42)', kind: 'sub' },
  { name: 'HRB400(C),HRB400E(CE),HRBF', value: '(40/44)', kind: 'sub' },
  { name: 'HRB500(E),HRB500E(EE),HRBF', value: '(48/53)', kind: 'sub' },
  { name: '冷轧带肋钢筋锚固', value: '(45)', kind: 'sub' },
  { name: '冷轧扭钢筋锚固', value: '(45)', kind: 'sub' },
  { name: 'HPB235(A),HPB300(A)搭接', value: '(55)', kind: 'sub' },
  { name: 'HRB335(B),HRB335E(BE),HRBF', value: '(54/59)', kind: 'sub' },
  { name: 'HRB400(C),HRB400E(CE),HRBF', value: '(56/63)', kind: 'sub' },
];

function PropsPanel() {
  return (
    <div className="flex-1 ml-[7px] flex flex-col text-[12px] text-[#1a1a1a]">
      <div className="h-[25px] flex items-end">
        <div className="w-[58px] h-[25px] bg-white border border-b-0 border-[#d0d0d0] flex items-center justify-center">
          属性编辑
        </div>
      </div>
      <div className="flex-1 flex bg-white">
        <div className="w-[981px] h-[561px] border border-b-2 border-[#a6a6a6] overflow-hidden pl-px shrink-0">
          <div className="h-[23px] flex border-b border-[#bdbdbd]">
            <div className="w-[21px] bg-[#f3f3f3] border-r border-[#bdbdbd]" />
            <div className="w-[191px] border-r border-[#bdbdbd] bg-gradient-to-b from-[#fafafa] to-[#ececec] flex items-center justify-center">
              属性名称
            </div>
            <div className="w-[110px] bg-gradient-to-b from-[#fbdca0] to-[#f0bc62] flex items-center justify-center text-[#6a0a6a]">
              属性值
            </div>
            <div className="flex-1 bg-[#f5f5f5]" />
          </div>
          {propRows.map((r, i) => {
            const sel = i === 2;
            return (
              <div key={i} className="h-[19px] flex border-b border-[#c4c4c4]">
                <div
                  className={
                    sel
                      ? `w-[21px] shrink-0 bg-[#fbd38f] border-r border-[#bdbdbd] flex items-center justify-center text-[#7a4a00] ${mono}`
                      : `w-[21px] shrink-0 bg-gradient-to-b from-[#fafafa] to-[#ececec] border-r border-[#bdbdbd] flex items-center justify-center ${mono}`
                  }
                >
                  {i + 1}
                </div>
                <div
                  className={`w-[191px] shrink-0 border-r border-[#c4c4c4] flex items-center overflow-hidden ${sel ? 'bg-[#0078d7] text-white' : r.kind === 'group' ? 'text-[#8f8f8f]' : (r.color ?? '')}`}
                >
                  {r.kind === 'top' && <div className="w-[20px] shrink-0" />}
                  {r.kind === 'group' && (
                    <div className="ml-[2px] mr-[5px] w-[13px] h-[13px] shrink-0 border border-[#a0a0a0] flex items-center justify-center">
                      <div className="w-[7px] h-px bg-[#444]" />
                    </div>
                  )}
                  {r.kind === 'sub' && (
                    <>
                      <div className="w-[8px] shrink-0" />
                      <div className="w-[16px] h-full shrink-0 flex flex-col">
                        <div className="h-[9px] border-l border-b border-[#c0c0c0]" />
                        <div className={r.last ? 'h-[10px]' : 'h-[10px] border-l border-[#c0c0c0]'} />
                      </div>
                      <div className="w-[6px] shrink-0" />
                    </>
                  )}
                  <Sim text={r.name} />
                </div>
                <div className={`flex-1 flex items-center pl-[2px] ${sel ? 'bg-[#d5e8f8]' : ''} ${r.gray ? 'text-[#9a9a9a]' : ''}`}>
                  {r.value && <Sim text={r.value} />}
                </div>
              </div>
            );
          })}
        </div>
        <div className="w-[17px] h-[561px] bg-[#f0f0f0] flex flex-col items-center justify-between py-[6px]">
          <Chevron dir="up" />
          <Chevron dir="down" />
        </div>
        <div className="flex-1 bg-white" />
      </div>
    </div>
  );
}

function DimH({ x1, x2, y, c = '#7cc866' }: { x1: number; x2: number; y: number; c?: string }) {
  const tick = (x: number) => `M${x} ${y - 9}V${y + 10}M${x - 7} ${y + 7}L${x + 6} ${y - 6}`;
  return <path d={`M${x1} ${y}H${x2}${tick(x1)}${tick(x2)}`} fill="none" stroke={c} shapeRendering="crispEdges" />;
}

function DimV({ x, y1, y2, c = '#7cc866' }: { x: number; y1: number; y2: number; c?: string }) {
  const tick = (y: number) => `M${x - 9} ${y}H${x + 9}M${x - 6} ${y - 6}L${x + 6} ${y + 7}`;
  return <path d={`M${x} ${y1}V${y2}${tick(y1)}${tick(y2)}`} fill="none" stroke={c} shapeRendering="crispEdges" />;
}

function GrayDash({ d }: { d: string }) {
  return (
    <g shapeRendering="crispEdges">
      <path d={d} fill="none" stroke="#3f444f" strokeDasharray="7 3" />
      <path d={d} fill="none" stroke="#000" strokeDasharray="2 8" />
    </g>
  );
}

function RebarCanvas() {
  const dots: [number, number][] = [
    [913, 342],
    [1003, 342],
    [1098, 342],
    [1004, 455],
    [1098, 453],
    [1004, 538],
    [1098, 535],
  ];
  const dimText = 'fill-white text-[14px]';
  const grayText = 'fill-[#3b404a] text-[14px]';
  return (
    <svg viewBox="690 196 640 441" className="size-full font-['Liberation_Sans',sans-serif]">
      <GrayDash d="M793 325H895M1115 325h7M793 388H1122M793 420H1122M793 515H1122" />
      <GrayDash d="M804 325V515M895 317V631M926 317V631M989 317V631M1116 317V631M895 605H1116" />
      <path
        d="M804 325l-10-10M804 388l-10-10M804 420l-10-10M804 515l-10-10M895 605l-7 7M895 605l7-7M926 605l-7 7M926 605l7-7M989 605l-7 7M989 605l7-7M1116 605l-7 7M1116 605l7-7"
        stroke="#3f444f"
      />
      <path d="M1116 323L1182 196" stroke="#9a9a9a" strokeDasharray="2 2" />

      <path
        d="M904 325V380M895 379.500H1116M936 325V420M936 410.500H1116M990 504.500H1115M1103 325v15M998 325v15M895 338h9M1100 338h16"
        fill="none"
        stroke="#9fc9ef"
        strokeDasharray="4 3"
        shapeRendering="crispEdges"
      />

      <path d="M895 325H1116V515H989V420H927V388H895Z" fill="none" stroke="#ececec" strokeWidth="3" shapeRendering="crispEdges" />

      <DimH x1={895} x2={1116} y={300} />
      <DimV x={871} y1={325} y2={388} />
      <DimV x={902} y1={388} y2={421} />
      <DimH x1={895} x2={927} y={413} />
      <DimH x1={926} x2={989} y={445} />
      <DimV x={965} y1={420} y2={515} />
      <DimV x={1140} y1={325} y2={515} />
      <DimH x1={989} x2={1116} y={539} />

      <text x="830" y="362" textAnchor="middle" className={grayText}>100</text>
      <text x="834" y="409" textAnchor="middle" className={grayText}>50</text>
      <text x="831" y="472" textAnchor="middle" className={grayText}>150</text>
      <text x="910" y="579" textAnchor="middle" className={grayText}>50</text>
      <text x="958" y="579" textAnchor="middle" className={grayText}>100</text>
      <text x="1052" y="579" textAnchor="middle" className={grayText}>200</text>

      <text x="1005" y="294" textAnchor="middle" className={dimText}>350</text>
      <text x="857" y="363" textAnchor="middle" className={dimText}>100</text>
      <text x="888" y="410" textAnchor="middle" className={dimText}>50</text>
      <text x="910" y="432" textAnchor="middle" className={dimText}>50</text>
      <text x="957" y="463" textAnchor="middle" className={dimText}>100</text>
      <text x="951" y="473" textAnchor="middle" className={dimText}>150</text>
      <text x="1152" y="426" textAnchor="middle" className={dimText}>300</text>
      <text x="1052" y="558" textAnchor="middle" className={dimText}>200</text>

      <text x="1181" y="205" className="fill-[#bdbdbd] text-[27px] font-['Noto_Sans_CJK_SC',sans-serif]">上部纵筋</text>
      <text x="1296" y="205" className="fill-[#3fe04f] text-[27px] font-['Noto_Sans_CJK_SC',sans-serif]">按</text>

      <g fill="none" stroke="#c8171e" strokeWidth="6">
        <path d="M1260 578H1004Q999 578 999 572V337M1103 578V342Q1103 337 1097 337H907L902 339" />
        <path d="M1008 337V369M907 341L935 378" />
      </g>
      <path d="M996 336a8 8 0 0116 0z" fill="#c8171e" />
      <path d="M903 336l8-3v8z" fill="#c8171e" />

      {dots.map(([x, y]) => (
        <g key={`${x}-${y}`}>
          <path d={`M${x} ${y - 3}L${x + 3} ${y}L${x} ${y + 3}L${x - 3} ${y}Z`} fill="#8a5a10" stroke="#ffd21a" strokeWidth="1.200" />
        </g>
      ))}
    </svg>
  );
}

function SectionDialog() {
  return (
    <div className="absolute left-[675px] top-[84px] w-[668px] h-[619px] border-x border-b border-[#2c4f6b] bg-gradient-to-b from-[#9ab3d0] to-[#b9d1ea] to-[6%] flex flex-col text-[12px] text-[#1a1a1a] whitespace-nowrap">
      <div className="h-[29px] pl-[8px] pt-[10px] leading-[14px] text-[#111] shrink-0">截面编辑</div>
      <div className="ml-[7px] w-[653px] h-[555px] bg-[#efefef] flex flex-col shrink-0">
        <div className="h-[21px] flex items-end shrink-0">
          <div className="ml-[2px] w-[41px] h-[19px] border border-b-0 border-[#cfcfcf] flex items-center justify-center">截面</div>
          <div className="w-[44px] h-[21px] bg-white border-x border-t border-[#e0e0e0] flex items-center justify-center">配筋</div>
        </div>
        <div className="mx-px flex-1 border border-[#d8d8d8] bg-[#f0f0f0] flex flex-col">
          <div className="h-[28px] mt-[2px] ml-[3px] w-[493px] bg-[#f7f7f7] rounded-sm flex items-center shrink-0">
            <span className="ml-[7px]">纵筋</span>
            <Sep className="ml-[8px]" />
            <span className="ml-[7px]">直线</span>
            <Caret className="ml-[6px]" />
            <div className="ml-[4px] w-[49px] h-[24px] bg-white flex items-center justify-between px-[3px]">
              <span className="font-['Liberation_Sans',sans-serif]">2C8</span>
              <Caret />
            </div>
            <Sep className="ml-[5px]" />
            <div className="ml-[2px] w-[51px] h-[24px] border border-[#0078d7] bg-[#e5f1fb] flex items-center">
              <I w={13} h={18} className="ml-[3px]">
                <path d="M1.500 1v13l3-3 3 6 2-1-3-6h4z" fill="#fff" stroke="#777" />
              </I>
              <span className="ml-[5px]">选择</span>
            </div>
            <span className="ml-[5px]">手动设置参考线</span>
            <Caret className="ml-[7px]" />
            <Sep className="ml-[6px]" />
            <I className="ml-[5px]">
              <path d="M4 1h11l-3 14H1z" fill="#eef6fd" stroke="#1c7fd1" strokeWidth="1.400" />
              <path d="M2 8h11M5 5l3 3 3-3" fill="none" stroke="#1c7fd1" strokeWidth="1.400" />
            </I>
            <span className="ml-[4px]">设置标高</span>
            <I h={18} className="ml-[8px]">
              <path d="M1 6h14v11H1z" fill="#fff" stroke="#333" />
              <path d="M5 7v9M9 7v9M1 11h14" stroke="#333" />
              <circle cx="9" cy="4" r="4" fill="#cfe0f3" stroke="#7d94b0" />
              <rect x="2" y="13" width="3" height="3" fill="#c8171e" />
            </I>
            <span className="ml-[3px]">显示标注</span>
            <GrayT className="ml-[9px]">删除</GrayT>
          </div>
          <div className="h-[25px] ml-[3px] mt-px w-[163px] bg-[#f7f7f7] rounded-sm flex items-center shrink-0">
            <span className="ml-[6px]">横筋</span>
            <Sep className="ml-[8px]" />
            <span className="ml-[2px]">钢筋类型:</span>
            <div className="ml-px w-[34px] h-[23px] border border-[#0078d7] bg-[#e5f1fb] flex items-center justify-center">水平</div>
            <span className="ml-[5px]">垂直</span>
          </div>
          <div className="ml-[3px] mt-[3px] w-[644px] h-[445px] border-2 border-[#ff0000] bg-[#141821] shrink-0 overflow-hidden">
            <RebarCanvas />
          </div>
          <div className="h-[27px] ml-[4px] flex items-center shrink-0">
            <div className="w-[51px] h-[23px] border border-[#0078d7] bg-[#e5f1fb] flex items-center">
              <I className="ml-[2px]">
                <path d="M3 15V2M1 4l2-3 2 3M3 13h12" fill="none" stroke="#b0574d" strokeWidth="1.500" />
                <path d="M3 8l5-5M3 12l9-9" stroke="#c9c9c9" />
              </I>
              <span className="ml-[4px]">正交</span>
            </div>
            <div className="w-[75px] h-[23px] border border-[#0078d7] bg-[#e5f1fb] flex items-center">
              <I className="ml-[2px]">
                <rect x="1" y="2" width="14" height="12" fill="#f5f5f5" stroke="#777" />
                <path d="M4 6v5M7 6h2v2H7v3h2M11 6h2v5h-2" fill="none" stroke="#444" />
              </I>
              <span className="ml-[3px]">动态输入</span>
            </div>
            <div className="ml-px h-[25px] w-[104px] bg-[#f7f7f7] rounded-sm flex items-center">
              <I className="ml-[6px]">
                <path d="M0 14h15" stroke="#7da7d9" strokeWidth="1.500" />
                <path d="M12 0v15" stroke="#2f6fc4" strokeWidth="1.300" />
                <rect x="10" y="12" width="4" height="4" fill="#1f3f8f" />
              </I>
              <span className="ml-[4px]">垂点</span>
              <I className="ml-[7px]">
                <path d="M0 8h16" stroke="#7da7d9" strokeWidth="1.500" />
                <rect x="6" y="6" width="4" height="4" fill="#1f3f8f" />
              </I>
              <span className="ml-[4px]">中点</span>
            </div>
          </div>
        </div>
      </div>
      <div className="ml-[7px] mt-[4px] w-[653px] h-[23px] flex gap-[2px] shrink-0">
        <div className="w-[96px] bg-gradient-to-b from-white to-[#ececec] border border-[#d8d8d8] flex items-center pl-[4px] text-[11px] font-['Liberation_Sans',sans-serif]">
          (X: 54 Y: 171)
        </div>
        <div className="flex-1 bg-gradient-to-b from-white to-[#ececec] border border-[#d8d8d8] flex items-center pl-[2px] justify-between">
          <span>选择钢筋进行编辑，选择标注进行修改或移动;</span>
          <I w={10} h={10} className="self-end">
            <path d="M8 2h2v2H8zM4 6h2v2H4zM8 6h2v2H8zM0 8h2v2H0zM4 8h2v2H4zM8 8h2v2H8z" fill="#bdbdbd" />
          </I>
        </div>
      </div>
    </div>
  );
}

function StatusBar() {
  const cell = 'h-[20px] bg-gradient-to-b from-white to-[#ececec] border border-[#dadada] flex items-center shrink-0';
  return (
    <div className="h-[21px] bg-[#f0f0f0] flex items-start gap-[2px] text-[12px] text-[#111] pt-px whitespace-nowrap">
      <div className={`${cell} w-[148px]`} />
      <div className={`${cell} w-[78px]`}><Sim text="层高:2.8m" /></div>
      <div className={`${cell} w-[98px]`}><Sim text="底标高:17.55m" /></div>
      <div className={`${cell} w-[47px]`}><Sim text="0" /></div>
      <div className={`${cell} w-[915px]`} />
      <div className={`${cell} w-[70px]`}><Sim text="63.1 FPS" /></div>
    </div>
  );
}

function Taskbar() {
  return (
    <div className="h-[40px] bg-[#04101a] flex items-stretch text-[12px] text-[#d8d8d8] whitespace-nowrap">
      <div className="w-[48px] bg-black flex items-center justify-center">
        <I>
          <path d="M0 2.500l6.500-1v6H0zM7.500 1.300L16 0v7.500H7.500zM0 8.500h6.500v6l-6.500-1zM7.500 8.500H16V16l-8.500-1.300z" fill="#fff" />
        </I>
      </div>
      <div className="w-[344px] bg-[#343434] flex items-center">
        <div className="ml-[9px] w-[22px] h-[22px] rounded-full border-[3px] border-[#dcdcdc]" />
        <span className="ml-[5px] text-[14px] text-[#8c8c8c]">在这里输入你要搜索的内容</span>
        <I w={12} h={20} className="ml-[113px]">
          <rect x="3" y="1" width="6" height="12" rx="3" fill="none" stroke="#9a9a9a" />
          <path d="M1 9c0 6 10 6 10 0M6 15v3M3 18.500h6" fill="none" stroke="#9a9a9a" />
        </I>
      </div>
      <div className="flex items-center">
        <I w={20} h={18} className="ml-[14px]">
          <rect x="4.500" y="1" width="11" height="16" fill="none" stroke="#fff" strokeWidth="1.300" />
          <path d="M2.500 4H.5v10h2M17.500 4h2v10h-2" fill="none" stroke="#fff" />
        </I>
        <I w={22} h={22} className="ml-[29px]">
          <path d="M11 11C5 11 1 9 1 5s5-5 7-3 3 5 3 9zM11 11c0-6 2-10 6-10s5 5 3 7-5 3-9 3zM11 11c6 0 10 2 10 6s-5 5-7 3-3-5-3-9zM11 11c0 6-2 10-6 10s-5-5-3-7 5-3 9-3z" fill="#e3e3e3" />
        </I>
        <I w={22} h={24} className="ml-[31px]">
          <path d="M4 12h14c0-7-9-8-12-3M17 16c-3 5-11 4-12-3" fill="none" stroke="#e8e8e8" strokeWidth="3" />
          <path d="M4 4c4-3 12-4 16-3M2 20c-1 3 3 3 6 1" fill="none" stroke="#cfcfcf" strokeWidth="1.300" />
        </I>
        <I w={20} h={20} className="ml-[27px]">
          <path d="M10 2a8 8 0 107.500 11M5 9a5 5 0 108-2c-3-2-5 0-5 2s3 3 4 1M4 3c3-3 10-3 14 2" fill="none" stroke="#bdbdbd" strokeWidth="1.300" />
        </I>
        <div className="ml-[24px] h-[18px] w-[3px] border-x border-[#3e474e]" />
        <I w={20} h={22} className="ml-[24px]">
          <path d="M2 11h15c0-6-3-9-8-9S1 6 1 12s4 9 9 9c3 0 5-1 7-3v-4c-3 3-9 4-10-3" fill="#1a7fdc" />
          <path d="M7 8h5c0-3-5-3-5 0z" fill="#04101a" />
        </I>
        <I w={24} h={24} className="ml-[24px]">
          <path d="M5 12h14c0-6-8-7-11-3M18 16c-3 5-11 4-12-3" fill="none" stroke="#2f9be6" strokeWidth="3.500" />
          <path d="M3 7C5 2 20-1 22 2c1 2-3 6-5 8M2 17c-2 4 0 7 7 3" fill="none" stroke="#f0c419" strokeWidth="1.600" />
        </I>
        <I w={24} h={22} className="ml-[19px]">
          <path d="M2 3h8l2 2h10v16H2z" fill="#f4d470" />
          <path d="M2 8h20v13H2z" fill="#fbe59a" />
          <path d="M8 21v-6h8v6z" fill="#3a9ad9" />
          <path d="M6 15l6-4 6 4z" fill="#3a9ad9" />
        </I>
        <div className="ml-[10px] w-[42px] h-[40px] bg-[#2e3a40] border-b-2 border-[#6cb0f0] flex items-center justify-center">
          <AppLogo size={23} />
        </div>
        <div className="ml-[5px] w-[34px] h-[40px] border-b-2 border-[#6cb0f0] flex items-center justify-center">
          <I w={25} h={26}>
            <path d="M24 3C14-1 2 2 2 13c0 8 7 12 13 11 6-1 9-6 7-11h-9v4h4c-1 3-7 3-9-1-2-5 3-11 11-10z" fill="#1280d8" />
          </I>
        </div>
        <div className="ml-[9px] w-[34px] h-[40px] border-b-2 border-[#6cb0f0] flex items-center justify-center">
          <I w={24} h={26}>
            <rect width="24" height="26" rx="2" fill="#e8810e" />
            <rect x="4" y="3" width="16" height="20" fill="#fbeec4" transform="rotate(8 12 13)" />
            <path d="M7 9h9M7 13h9M7 17h6" stroke="#b08a4a" />
            <path d="M22 4L12 18" stroke="#b03a10" strokeWidth="2" />
          </I>
        </div>
        <div className="ml-[9px] w-[34px] h-[40px] border-b-2 border-[#6cb0f0] flex items-center justify-center">
          <I w={22} h={26}>
            <circle cx="11" cy="14" r="11" fill="#e6f2d8" />
            <circle cx="11" cy="14" r="9" fill="#7ec430" />
            <path d="M5 13h12c0-6-12-6-12 1s8 6 11 3" fill="none" stroke="#fff" strokeWidth="2" />
            <path d="M14 3c2-2 4-3 6-2" fill="none" stroke="#4a9a10" strokeWidth="2" />
          </I>
        </div>
        <div className="ml-[20px] h-[18px] w-[3px] border-x border-[#3e474e]" />
        <span className="ml-[10px] w-[24px]">链接</span>
        <div className="ml-[19px] w-[47px] flex flex-col items-center leading-[17px]">
          <span className="text-[13px]">11%</span>
          <span>CPU使用</span>
        </div>
        <I w={12} h={8} className="ml-[21px]">
          <path d="M.5 7.500L6 1l5.500 6.500" fill="none" stroke="#fff" strokeWidth="1.200" />
        </I>
        <I w={16} h={14} className="ml-[10px]">
          <path d="M2 0v3M5 0v3M1 3h5v3H1zM3.500 6v5" stroke="#fff" fill="none" />
          <rect x="4" y="4" width="11" height="9" fill="#04101a" stroke="#ddd" />
          <rect x="5.500" y="5.500" width="7" height="6" fill="#ddd" />
        </I>
        <I w={14} h={14} className="ml-[11px]">
          <path d="M1 13A12 12 0 0113 1M4 13a9 9 0 019-9M7 13a6 6 0 016-6" fill="none" stroke="#ddd" strokeDasharray="1.500 1" />
          <circle cx="12" cy="12" r="1.500" fill="#fff" />
        </I>
        <I w={16} h={14} className="ml-[6px]">
          <path d="M1 5h3l4-4v12L4 9H1z" fill="none" stroke="#fff" />
          <path d="M10 4c2 2 2 4 0 6M13 2c3 3 3 7 0 10" fill="none" stroke="#ccc" />
        </I>
        <I w={23} h={14} className="ml-[9px]">
          <rect x=".5" y=".5" width="22" height="13" fill="none" stroke="#ddd" />
          <path d="M3 4h17M3 7h17" stroke="#ddd" strokeDasharray="1.500 1" />
          <path d="M6 10.500h11" stroke="#ddd" />
        </I>
        <span className="ml-[11px] text-white">中</span>
        <div className="ml-[14px]"><SLogo size={16} /></div>
        <div className="ml-[20px] w-[52px] flex flex-col items-center leading-[18px] text-[13px] text-[#e6e6e6]">
          <span>20:17</span>
          <span>2018/5/2</span>
        </div>
        <I w={16} h={17} className="ml-[23px]">
          <path d="M.5.5h15v12h-5L7.500 16v-3.500h-7z" fill="none" stroke="#fff" />
        </I>
      </div>
    </div>
  );
}

export default function App() {
  return (
    <div className="relative w-[1366px] h-[768px] overflow-hidden bg-[#f0f0f0] flex flex-col font-['Noto_Sans_CJK_SC','Liberation_Sans',sans-serif]">
      <TitleBar />
      <MenuBar />
      <MainToolbar />
      <div className="h-[623px] flex">
        <LeftPanel />
        <div className="flex-1 flex flex-col bg-white min-w-0">
          <SecondToolbar />
          <div className="flex-1 flex pl-[6px]">
            <ListPanel />
            <PropsPanel />
          </div>
        </div>
      </div>
      <StatusBar />
      <Taskbar />
      <SogouBar />
      <SectionDialog />
    </div>
  );
}
